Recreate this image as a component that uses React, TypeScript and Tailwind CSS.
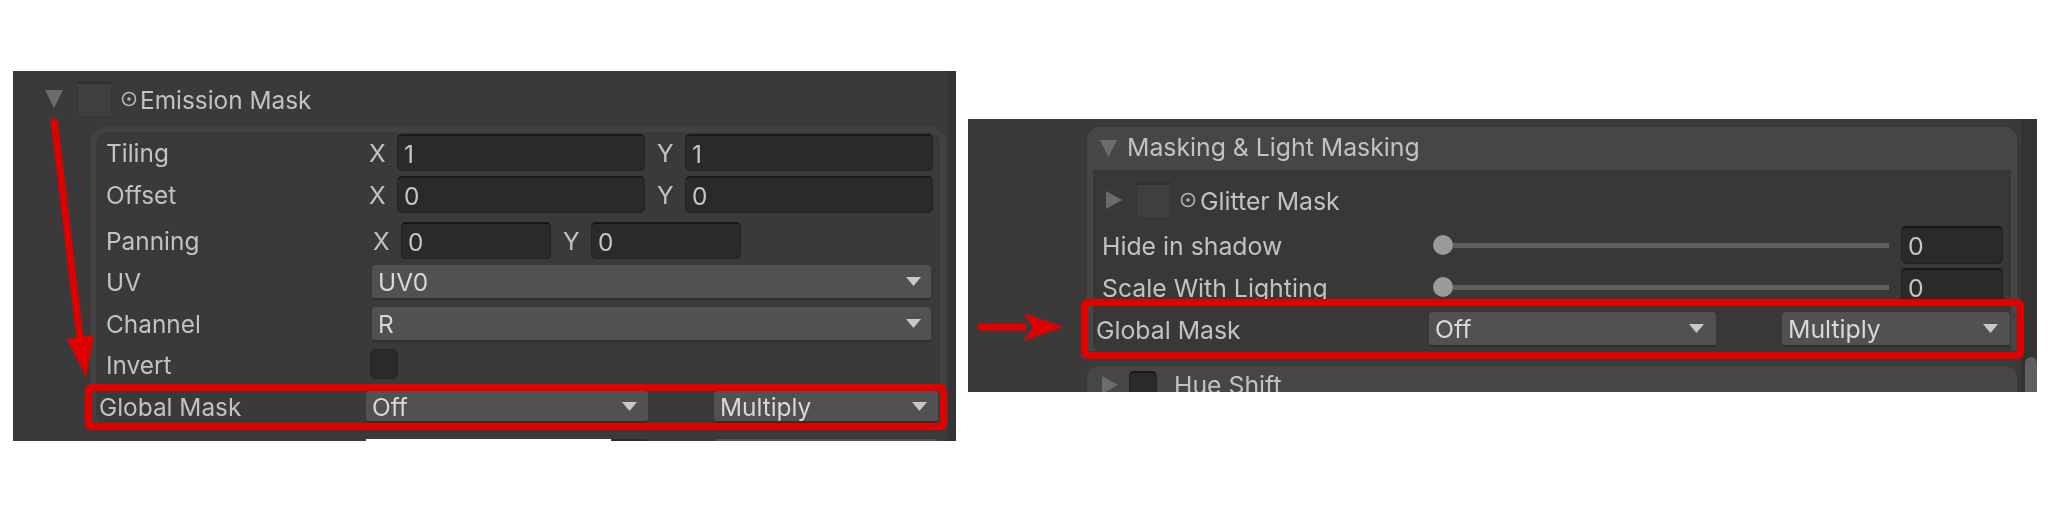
import { ReactElement } from "react";

type TriangleProps = {
  direction?: "down" | "right";
  className: string;
};

// Foldout and dropdown arrows
function Triangle({ direction = "down", className }: TriangleProps): ReactElement {
  return (
    <svg viewBox="0 0 18 18" preserveAspectRatio="none" className={className} fill="currentColor">
      {direction === "down" ? <polygon points="0,0 18,0 9,18" /> : <polygon points="0,0 18,9 0,18" />}
    </svg>
  );
}

function TargetIcon({ className }: { className: string }): ReactElement {
  return (
    <svg viewBox="0 0 16 16" className={className} fill="none" stroke="#b4b4b4">
      <circle cx="8" cy="8" r="6.5" strokeWidth="1.6" />
      <circle cx="8" cy="8" r="1.8" fill="#b4b4b4" strokeWidth="0" />
    </svg>
  );
}

function Thumb(): ReactElement {
  return <div className="w-[35px] h-[36px] shrink-0 bg-[#3f3f3f] border border-[#363636] border-t-[3px] border-t-[#313131]" />;
}

function NumberField({ value, className }: { value: string; className: string }): ReactElement {
  return (
    <div className={`flex items-center pl-[6px] pt-[2px] shrink-0 bg-[#2a2a2a] border border-[#232323] border-t-2 border-t-[#171717] rounded-[5px] text-[#c6c6c6] ${className}`}>
      {value}
    </div>
  );
}

function Dropdown({ value, className }: { value: string; className: string }): ReactElement {
  return (
    <div className={`flex items-center justify-between pl-[6px] shrink-0 bg-[#515151] border-b-2 border-b-[#2e2e2e] rounded-[4px] text-[#d8d8d8] ${className}`}>
      <span className="pt-[2px]">{value}</span>
      <Triangle className="w-[15px] h-[9px] text-[#c8c8c8]" />
    </div>
  );
}

function Vector2Row({ label, labelClass, fieldClass, x, y, rowClass }: {
  label: string;
  labelClass: string;
  fieldClass: string;
  x: string;
  y: string;
  rowClass: string;
}): ReactElement {
  return (
    <div className={`flex items-center pl-[10px] ${rowClass}`}>
      <span className={`shrink-0 pt-[2px] ${labelClass}`}>{label}</span>
      <span className="w-[29px] shrink-0 pt-[2px] pl-px">X</span>
      <NumberField value={x} className={fieldClass} />
      <span className="w-[28px] ml-[12px] shrink-0 pt-[2px]">Y</span>
      <NumberField value={y} className={fieldClass} />
    </div>
  );
}

function SliderRow({ label, rowClass }: { label: string; rowClass: string }): ReactElement {
  return (
    <div className={`flex items-center pl-[9px] h-[38px] ${rowClass}`}>
      <span className="w-[331px] shrink-0 pt-[2px]">{label}</span>
      <div className="w-[456px] flex items-center shrink-0">
        <div className="w-[20px] h-[20px] rounded-full bg-[#9a9a9a] shrink-0" />
        <div className="flex-1 h-[5px] bg-[#5e5e5e]" />
      </div>
      <NumberField value="0" className="w-[102px] h-[38px] ml-[12px]" />
    </div>
  );
}

function EmissionPanel(): ReactElement {
  return (
    <div className="relative w-[943px] h-[370px] shrink-0 overflow-hidden bg-[#3a3a3a] border-r-[8px] border-r-[#343434] text-[#c2c2c2] text-[24.4px]">
      {/* Header */}
      <div className="flex items-center pl-[32px] pt-[10px]">
        <Triangle className="w-[18px] h-[18px] text-[#6c6c6c]" />
        <div className="ml-[14px]"><Thumb /></div>
        <TargetIcon className="w-[16px] h-[16px] ml-[9px]" />
        <span className="ml-[3px] pt-[2px]">Emission Mask</span>
      </div>

      {/* Texture properties */}
      <div className="ml-[77px] mt-[9px] w-[856px] h-[299px] border-[6px] border-b-0 border-[#424242] rounded-t-[18px] rounded-bl-[14px] pt-[2px]">
        <Vector2Row label="Tiling" x="1" y="1" rowClass="" labelClass="w-[262px]" fieldClass="w-[248px] h-[37px]" />
        <Vector2Row label="Offset" x="0" y="0" rowClass="mt-[5px]" labelClass="w-[262px]" fieldClass="w-[248px] h-[37px]" />
        <Vector2Row label="Panning" x="0" y="0" rowClass="mt-[9px]" labelClass="w-[266px]" fieldClass="w-[150px] h-[37px]" />
        <div className="flex items-center pl-[10px] mt-[6px]">
          <span className="w-[266px] shrink-0">UV</span>
          <Dropdown value="UV0" className="w-[559px] h-[35px] pr-[10px]" />
        </div>
        <div className="flex items-center pl-[10px] mt-[7px]">
          <span className="w-[266px] shrink-0">Channel</span>
          <Dropdown value="R" className="w-[559px] h-[35px] pr-[10px]" />
        </div>
        <div className="flex items-center pl-[10px] mt-[7px]">
          <span className="w-[264px] shrink-0 pt-[2px]">Invert</span>
          <div className="w-[28px] h-[30px] shrink-0 bg-[#2a2a2a] border border-[#232323] rounded-[5px]" />
        </div>
        <div className="flex items-center pl-[3px] mt-[12px]">
          <span className="w-[267px] shrink-0">Global Mask</span>
          <Dropdown value="Off" className="w-[282px] h-[32px] pr-[11px]" />
          <Dropdown value="Multiply" className="w-[224px] h-[32px] ml-[66px] pr-[11px]" />
        </div>
      </div>

      {/* Next row, cut off by the crop */}
      <div className="flex ml-[353px] mt-[14px] h-[20px]">
        <div className="w-[245px] bg-white" />
        <div className="w-[37px] bg-[#2a2a2a] rounded-t-[4px]" />
        <div className="w-[224px] ml-[66px] bg-[#515151] rounded-t-[4px]" />
      </div>

      {/* Annotations */}
      <div className="absolute left-[72px] top-[313px] w-[862px] h-[46px] border-[7px] border-[#e00000] rounded-[6px]" />
      <svg className="absolute left-0 top-0 w-[120px] h-[320px]" viewBox="0 0 120 320">
        <line x1="41" y1="48" x2="68" y2="275" stroke="#e00000" strokeWidth="7" />
        <polygon points="54,268 81,264 73,306" fill="#e00000" />
      </svg>
    </div>
  );
}

function MaskingPanel(): ReactElement {
  return (
    <div className="relative flex w-[1069px] h-[273px] shrink-0 overflow-hidden bg-[#3a3a3a] text-[#c2c2c2] text-[24.8px]">
      <div className="w-[1053px] shrink-0 pl-[119px] pt-[8px]">
        {/* Masking section */}
        <div className="w-[930px] rounded-t-[12px] bg-[#464646] overflow-hidden">
          <div className="flex items-center h-[43px] pl-[13px]">
            <Triangle className="w-[17px] h-[17px] text-[#6c6c6c]" />
            <span className="ml-[10px] pb-[2px]">Masking &amp; Light Masking</span>
          </div>
          <div className="mx-[6px] h-[181px] bg-[#383838] rounded-bl-[6px] pt-[12px]">
            <div className="flex items-center pl-[13px]">
              <Triangle direction="right" className="w-[16px] h-[18px] text-[#6c6c6c]" />
              <div className="ml-[14px]"><Thumb /></div>
              <TargetIcon className="w-[16px] h-[16px] ml-[9px]" />
              <span className="ml-[4px] pt-[2px]">Glitter Mask</span>
            </div>
            <SliderRow label="Hide in shadow" rowClass="mt-[8px]" />
            <SliderRow label="Scale With Lighting" rowClass="mt-[4px]" />
            <div className="flex items-center pl-[3px] mt-[6px]">
              <span className="w-[333px] shrink-0 pt-[2px]">Global Mask</span>
              <Dropdown value="Off" className="w-[287px] h-[35px] pr-[12px]" />
              <Dropdown value="Multiply" className="w-[228px] h-[35px] ml-[66px] pr-[12px]" />
            </div>
          </div>
        </div>

        {/* Hue Shift section, cut off by the crop */}
        <div className="flex items-start w-[930px] h-[40px] mt-[15px] pl-[15px] pt-[5px] rounded-t-[12px] bg-[#464646]">
          <Triangle direction="right" className="w-[16px] h-[18px] mt-[5px] text-[#6c6c6c]" />
          <div className="w-[28px] h-[28px] ml-[11px] shrink-0 bg-[#2a2a2a] border border-[#232323] border-t-2 border-t-[#171717] rounded-[5px]" />
          <span className="ml-[17px] mt-[2px]">Hue Shift</span>
        </div>
      </div>

      {/* Scrollbar */}
      <div className="w-[16px] shrink-0 bg-[#333333] pl-[4px] pt-[238px]">
        <div className="h-[40px] bg-[#5f5f5f] rounded-t-[6px]" />
      </div>

      {/* Annotations */}
      <div className="absolute left-[113px] top-[180px] w-[943px] h-[60px] border-[7px] border-[#e00000] rounded-[6px]" />
      <svg className="absolute left-0 top-[190px] w-[100px] h-[40px]" viewBox="0 0 100 40">
        <rect x="10" y="14.5" width="48" height="7" fill="#e00000" />
        <polygon points="55,4 96,18 55,32 65,18" fill="#e00000" />
      </svg>
    </div>
  );
}

export default function App(): ReactElement {
  return (
    <div className="w-[2048px] h-[512px] bg-white overflow-hidden flex items-start pl-[13px] pt-[71px] gap-[12px] font-['Inter',sans-serif] leading-none blur-[0.5px]">
      <EmissionPanel />
      <div className="mt-[48px]">
        <MaskingPanel />
      </div>
    </div>
  );
}
